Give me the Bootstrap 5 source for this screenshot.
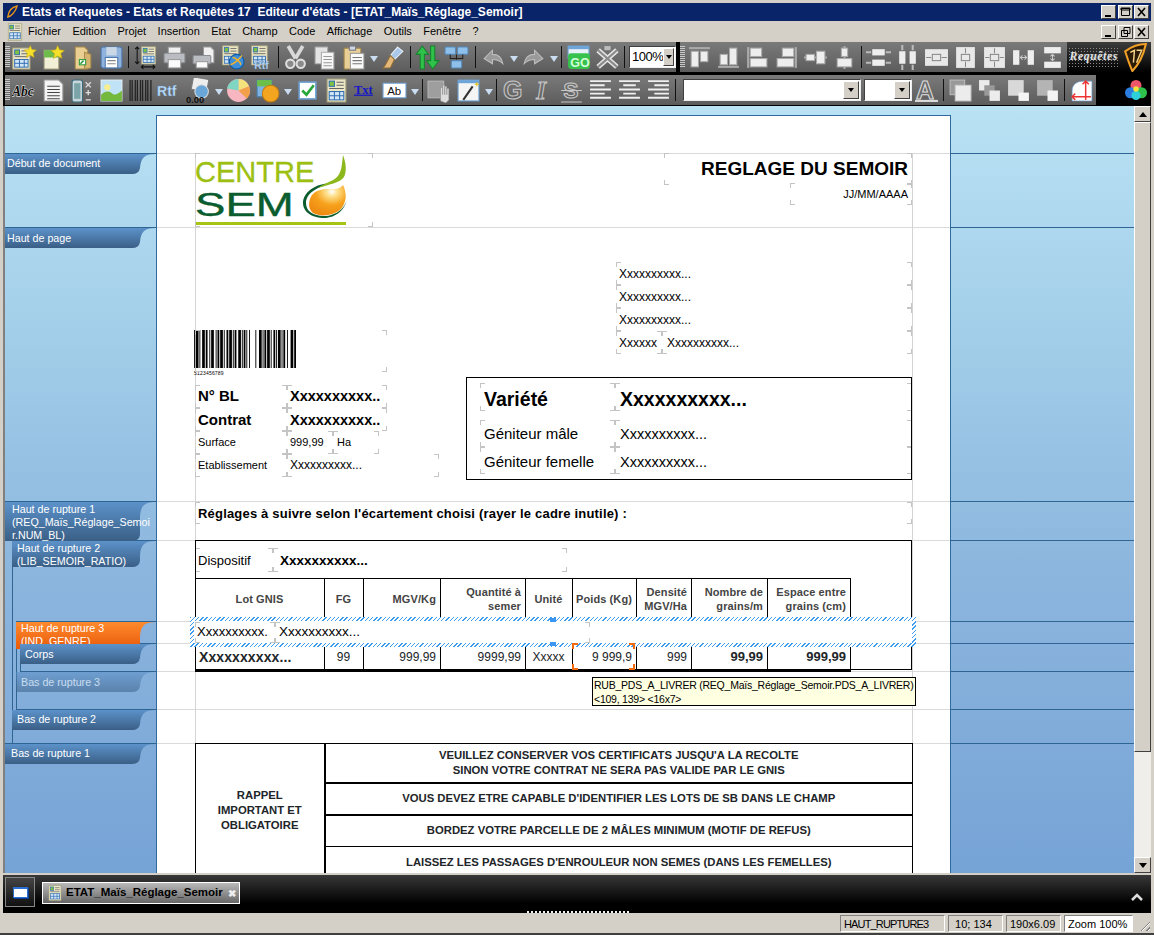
<!DOCTYPE html>
<html lang="fr">
<head>
<meta charset="UTF-8" />
<title>Editeur d'états</title>
<link href="https://cdn.jsdelivr.net/npm/bootstrap@5.3.0/dist/css/bootstrap.min.css" rel="stylesheet" />
<style>
  html, body { height: 100%; overflow: hidden; }
  body { background: #d4d0c8; font-family: "Liberation Sans", Arial, sans-serif; font-size: 11px; color: #000; }
  .app { height: 935px; width: 1154px; padding: 3px 3px 2px 3px; border-bottom: 2px solid #404040; }

  .titlebar { height: 18px; background: #0a246a; color: #fff; font-weight: 700; font-size: 12px; padding-left: 3px; flex: none; }
  .menubar { height: 21px; flex: none; padding-left: 3px; }
  .menubar .nav-link { color: #000; padding: 0; font-size: 11px; line-height: 21px; }
  .menu-items { gap: 0 11.4px; margin-left: 4px; }
  .winbtn { width: 15px; height: 14px; margin-left: 1.5px; background: #d4d0c8; border: 1px solid; border-color: #fff #404040 #404040 #fff; padding: 0; display: flex; }
  .winbtn svg { width: 13px; height: 12px; }
  .winbtns { margin-right: 2px; }

  .toolbars { background: #000; height: 64px; flex: none; padding-left: 2px; }
  .tbrow { height: 30px; }
  .tbrow + .tbrow { margin-top: 3px; }
  .tbgroup { background: linear-gradient(#7a7a7a, #5c5c5c); height: 100%; }
  .grip { width: 5px; height: 22px; background: repeating-linear-gradient(#c8c8c8 0 1px, transparent 1px 2px); flex: none; }
  .tb { width: 29px; height: 26px; flex: none; display: flex; align-items: center; justify-content: center; }
  .tb svg { width: 25px; height: 25px; }
  .dd { width: 11px; flex: none; display: flex; justify-content: center; padding-top: 3px; }
  .dd::after { content: ""; border: 4px solid transparent; border-top: 6px solid #c9dcf0; border-bottom: 0; }
  .sep { width: 5px; height: 22px; flex: none; display: flex; justify-content: center; }
  .sep::after { content: ""; width: 1px; background: #111; }
  .sep.wide { width: 8px; }
  .combo { background: #fff; border: 1px solid; border-color: #404040 #eee #eee #404040; height: 22px; flex: none; display: flex; align-items: center; padding-left: 2px; font-size: 13px; letter-spacing: -.5px; }
  .combo-zoom { width: 47px; margin-left: 2px; }
  .combo-font { width: 178px; margin-left: 5px; }
  .combo-size { width: 48px; margin-left: 3px; }
  .combo b { width: 16px; height: 18px; margin-left: auto; margin-right: 1px; background: #d4d0c8; border: 1px solid; border-color: #fff #404040 #404040 #fff; display: flex; align-items: center; justify-content: center; }
  .combo b::after { content: ""; border: 3.5px solid transparent; border-top: 4px solid #000; border-bottom: 0; }
  .brandbox { background: linear-gradient(#3c3c3c, #000); height: 100%; }
  .brand { color: #e2e2e2; font-style: italic; font-weight: 700; font-size: 11.5px; font-family: "Liberation Serif", serif; letter-spacing: .7px; padding: 1px 2px; text-shadow: 1px 0 0 #555; background: radial-gradient(#8a8a8a .5px, transparent .7px) 0 0/3px 3px; }

  .workspace { height: 767px; flex: none; }
  .leftedge { width: 2px; background: #808080; flex: none; }
  .canvas { width: 1129px; flex: none; position: relative; overflow: hidden; background: linear-gradient(#b9e2f4 0%, #a3cee9 30%, #8db6de 60%, #76a3d6 100%); }
  .scroll { width: 17px; flex: none; background: #efeeea; display: flex; flex-direction: column; }
  .scroll .sb { height: 16px; background: #d4d0c8; border: 1px solid; border-color: #fff #404040 #404040 #fff; display: flex; align-items: center; justify-content: center; flex: none; }
  .scroll .up::after { content: ""; border: 4px solid transparent; border-bottom: 5px solid #000; border-top: 0; }
  .scroll .down::after { content: ""; border: 4px solid transparent; border-top: 5px solid #000; border-bottom: 0; }
  .scroll .thumb { height: 630px; background: #d4d0c8; border: 1px solid; border-color: #fff #404040 #404040 #fff; flex: none; }

  .tabbar { height: 38px; margin-top: 2px; flex: none; background: linear-gradient(#383838, #000 75%); padding-left: 2px; }
  .winicon { width: 30px; height: 30px; border: 1px solid #888; background: linear-gradient(#444, #111); display: flex; align-items: center; justify-content: center; margin-bottom: 6px; }
  .winicon::after { content: ""; width: 15px; height: 11px; background: #fff; border: 1px solid #2a6fd0; border-top-width: 2px; box-shadow: 1px 1px 0 #0b3a90; }
  .doc-tab { width: 198px; height: 22px; margin-left: 7px; margin-bottom: 9px; background: linear-gradient(#b9b9b9, #666); border: 1px solid #fff; font-weight: 700; font-size: 11.5px; color: #000; padding-left: 4px; gap: 3px; }
  .doc-tab svg { width: 16px; height: 16px; flex: none; }
  .tab-close { color: #eee; font-size: 10px; margin-left: 2px; }
  .tab-caret { margin-right: 8px; margin-bottom: 12px; }

  .statusbar { height: 20px; flex: none; position: relative; gap: 3px; padding-right: 18px; }
  .statusbar .dots { position: absolute; left: 524px; top: -2px; width: 104px; height: 2px; background: repeating-linear-gradient(90deg, #f0f0f0 0 2px, transparent 2px 4px); }
  .cell { height: 17px; line-height: 16px; padding-left: 3px; border: 1px solid; border-color: #808080 #fff #fff #808080; font-size: 11px; flex: none; }
  .cell-name { width: 105px; letter-spacing: -.85px; }
  .cell-pos, .cell-size { width: 55px; }
  .cell-zoom { width: 69px; }
  .grip-corner { position: absolute; right: 1px; bottom: 2px; width: 12px; height: 12px; background: repeating-linear-gradient(135deg, transparent 0 2px, #808080 2px 3px, #fff 3px 4px); clip-path: polygon(100% 0, 100% 100%, 0 100%); }

  /* free canvas of the report designer, origin = canvas corner */
  .sheet { position: absolute; left: 151px; top: 9px; width: 795px; height: 800px; background: #fff; border: 1px solid #2f6a9c; }
  .hline, .vline { position: absolute; }
  .hline.page { height: 1px; background: #dadada; }
  .hline.side { height: 1px; background: #2f6593; }
  .vline.side { width: 1px; background: #2f6593; }
  .vline.page { width: 1px; background: #d4d4d4; }
  .tabsec { position: absolute; overflow: hidden; }
  .tabsec svg { position: absolute; left: 0; top: 0; }
  .tabsec div { position: absolute; color: #fff; font-size: 10.7px; line-height: 13px; white-space: nowrap; }
  .tabsec.fade { opacity: .55; }
  .rt { position: absolute; height: 20px; line-height: 20px; white-space: nowrap; font-size: 12px; }
  .rt.b { font-weight: 700; }
  .rt.spaced { letter-spacing: .19px; }
  .barcode-label { font-size: 5px; letter-spacing: .2px; }
  .frame { position: absolute; --c: #c4c4c4; background:
      linear-gradient(var(--c), var(--c)) 0 0/5px 1px no-repeat,
      linear-gradient(var(--c), var(--c)) 0 0/1px 5px no-repeat,
      linear-gradient(var(--c), var(--c)) 100% 0/5px 1px no-repeat,
      linear-gradient(var(--c), var(--c)) 100% 0/1px 5px no-repeat,
      linear-gradient(var(--c), var(--c)) 0 100%/5px 1px no-repeat,
      linear-gradient(var(--c), var(--c)) 0 100%/1px 5px no-repeat,
      linear-gradient(var(--c), var(--c)) 100% 100%/5px 1px no-repeat,
      linear-gradient(var(--c), var(--c)) 100% 100%/1px 5px no-repeat; }
  .frame.sel { --c: #f26a10; background-size: 6px 2px, 2px 6px, 6px 2px, 2px 6px, 6px 2px, 2px 6px, 6px 2px, 2px 6px; }
  .box { position: absolute; border: 1px solid #000; }
  .hatch { position: absolute; padding: 4px; background: repeating-linear-gradient(135deg, #3d9cec 0 1px, #fff 1px 3px); }
  .hatch div { background: #fff; height: 100%; }
  .handle { position: absolute; background: #3a96f0; }
  .tip { position: absolute; background: #ffffe1; border: 1px solid #000; font-size: 10.5px; letter-spacing: -.23px; line-height: 14px; padding: 0 1px; white-space: nowrap; }
  .logo-a { position: absolute; color: #9cbf12; font-size: 29px; line-height: 30px; -webkit-text-stroke: .3px #9cbf12; }
  .logo-b { position: absolute; color: #0b5c2e; font-size: 34px; line-height: 34px; transform: scaleX(1.34); transform-origin: 0 0; -webkit-text-stroke: .4px #0b5c2e; }
  .logo-bar { position: absolute; background: #a5c414; }

  .grid { position: absolute; width: 655px; table-layout: fixed; margin: 0; --bs-table-bg: transparent; }
  .grid td, .grid th { border: 1px solid #000; padding: 0 4px 0 3px; vertical-align: middle; font-size: 12px; line-height: 14px; }
  .grid th { height: 41px; color: #444; font-size: 11px; text-align: right; letter-spacing: .1px; }
  .grid td { height: 27px; text-align: right; border-bottom-width: 2px; }
  .grid th.center, .grid td.center { text-align: center; }
  .grid .lead { text-align: left; font-weight: 700; font-size: 14px; letter-spacing: .1px; }
  .grid .strong { font-weight: 700; font-size: 13px; }
  .remind { position: absolute; width: 717px; table-layout: fixed; margin: 0; --bs-table-bg: transparent; }
  .remind td { border: 1px solid #000; border-width: 1px; padding: 0 4px; text-align: center; vertical-align: middle; font-weight: 700; font-size: 11.3px; line-height: 15px; }
  .remind .thick td { border-bottom-width: 2px; }
  .remind .first { height: 39px; }
  .remind .next { height: 32px; }
  .remind .lefttop { border-right-width: 2px; border-bottom-width: 1px; }
</style>
</head>
<body>
<svg width="0" height="0" class="position-absolute">
  <defs>
    <symbol id="rep" viewBox="0 0 24 24"><rect x="3" y="1" width="18" height="22" fill="#ece7c6" stroke="#a9a57e"/><rect x="5" y="3" width="5" height="5" fill="#7fc241" stroke="#2f6db3"/><path d="M12 4h7M12 7h7M5 10h14" stroke="#666"/><rect x="5" y="13" width="14" height="8" fill="#d3e6f6" stroke="#2f6db3"/><path d="M5 17h14M10 13v8M15 13v8" stroke="#2f6db3"/></symbol>
    <symbol id="star" viewBox="0 0 24 24"><path d="M12 1l3 7 8 1-6 5 2 8-7-4-7 4 2-8-6-5 8-1z" fill="#f5e02c" stroke="#c9a90f"/></symbol>
    <symbol id="repnew" viewBox="0 0 24 24"><use href="#rep" x="-2" y="2" width="22" height="22"/><use href="#star" x="11" y="0" width="13" height="13"/></symbol>
    <symbol id="docnew" viewBox="0 0 24 24"><path d="M3 5h14v18H3z" fill="#f3f0d8" stroke="#a9a57e"/><rect x="3" y="5" width="14" height="7" fill="#6ebc4a"/><use href="#star" x="9" y="0" width="14" height="14"/></symbol>
    <symbol id="open" viewBox="0 0 24 24"><path d="M5 2h9l3 3v18H5z" fill="#e9cf92" stroke="#a88a4c"/><path d="M14 7l6 2v13l-6 1z" fill="#d5b570" stroke="#a88a4c"/><rect x="9" y="14" width="6" height="5" fill="#fff" stroke="#2c9a3b"/><path d="M10 18l3-3" stroke="#2c9a3b" stroke-width="1.500"/></symbol>
    <symbol id="save" viewBox="0 0 24 24"><rect x="2" y="2" width="20" height="20" rx="2" fill="#8fb3dd" stroke="#4d78ad"/><rect x="7" y="2" width="10" height="8" fill="#c9d7e6"/><rect x="6" y="12" width="12" height="10" fill="#fff" stroke="#4d78ad"/><path d="M8 15h8M8 18h8" stroke="#888"/></symbol>
    <symbol id="height" viewBox="0 0 24 24"><use href="#rep" x="6" y="1" width="18" height="18"/><path d="M4 2v16M2 4l2-2 2 2M2 16l2 2 2-2M8 21h13M10 19l-2 2 2 2M19 19l2 2-2 2" stroke="#111" fill="none"/></symbol>
    <symbol id="print" viewBox="0 0 24 24"><rect x="6" y="2" width="12" height="7" fill="#efefef" stroke="#999"/><rect x="2" y="8" width="20" height="9" rx="1" fill="#b9bcc0" stroke="#8a8d91"/><rect x="6" y="14" width="12" height="8" fill="#fafafa" stroke="#999"/></symbol>
    <symbol id="print2" viewBox="0 0 24 24"><path d="M12 2h7l3 3v12h-10z" fill="#f1f1f1" stroke="#999"/><rect x="2" y="10" width="17" height="8" rx="1" fill="#b9bcc0" stroke="#8a8d91"/><rect x="5" y="16" width="11" height="6" fill="#fafafa" stroke="#999"/></symbol>
    <symbol id="repweb" viewBox="0 0 24 24"><use href="#rep" x="0" y="0" width="20" height="20"/><ellipse cx="16" cy="16" rx="7" ry="7" fill="#3c8fd8" stroke="#0e5aa8"/><path d="M10 19c4-1 9-6 11-9M12 12c2 0 7 3 8 7" stroke="#f2b02c" stroke-width="1.500" fill="none"/></symbol>
    <symbol id="reprtf" viewBox="0 0 24 24"><use href="#rep" x="0" y="0" width="20" height="20"/><text x="5" y="23" font-family="Liberation Sans" font-weight="700" font-size="10" fill="#bfe0ff" stroke="#5a7fa8" stroke-width=".3">Rtf</text></symbol>
    <symbol id="cut" viewBox="0 0 24 24"><path d="M5 1l7 12M19 1l-7 12" stroke="#d8d8d8" stroke-width="3.500"/><circle cx="7" cy="18" r="4" fill="#8a8a8a" stroke="#ddd" stroke-width="2"/><circle cx="17" cy="18" r="4" fill="#8a8a8a" stroke="#ddd" stroke-width="2"/></symbol>
    <symbol id="copy" viewBox="0 0 24 24"><path d="M3 2h12v16H3z" fill="#e4e4e4" stroke="#aaa"/><path d="M9 7h12v16H9z" fill="#f7f7f7" stroke="#aaa"/><path d="M11 11h8M11 14h8M11 17h8M11 20h8" stroke="#999"/></symbol>
    <symbol id="paste" viewBox="0 0 24 24"><rect x="3" y="3" width="16" height="20" rx="1" fill="#e8cf96" stroke="#a88a4c"/><rect x="8" y="1" width="6" height="4" fill="#cfd6df" stroke="#778"/><rect x="9" y="8" width="13" height="15" fill="#fafafa" stroke="#999"/><path d="M11 12h9M11 15h9M11 18h9" stroke="#777"/></symbol>
    <symbol id="brush" viewBox="0 0 24 24"><path d="M16 2l5 4-8 8-4-4z" fill="#a9c8ea" stroke="#e9f1fa"/><path d="M9 10l4 4-4 8-7 0c3-3 4-7 7-12z" fill="#e3b878" stroke="#8d6a34"/></symbol>
    <symbol id="updown" viewBox="0 0 24 24"><path d="M7 1l6 8H9v14H5V9H1z" fill="#2fc24b" stroke="#16822b"/><path d="M17 23l6-8h-4V1h-4v14h-4z" fill="#2fc24b" stroke="#16822b"/></symbol>
    <symbol id="org" viewBox="0 0 24 24"><rect x="1" y="2" width="10" height="7" rx="1" fill="#8fc0ea" stroke="#5589b8"/><rect x="13" y="2" width="10" height="7" rx="1" fill="#8fc0ea" stroke="#5589b8"/><path d="M12 9v5M6 9v4h12V9" stroke="#222" fill="none"/><rect x="7" y="15" width="10" height="7" rx="1" fill="#8fc0ea" stroke="#5589b8"/></symbol>
    <symbol id="undo" viewBox="0 0 24 24"><path d="M3 13l8-8v4c5 0 9 3 10 9-3-3-6-4-10-4v4z" fill="#9a9a9a" stroke="#bdbdbd"/></symbol>
    <symbol id="redo" viewBox="0 0 24 24"><path d="M21 13l-8-8v4c-5 0-9 3-10 9 3-3 6-4 10-4v4z" fill="#9a9a9a" stroke="#bdbdbd"/></symbol>
    <symbol id="go" viewBox="0 0 24 24"><rect x="2" y="1" width="20" height="12" fill="#e8f0f8" stroke="#6fa4d8"/><rect x="2" y="1" width="20" height="3" fill="#6fa4d8"/><rect x="2" y="8" width="21" height="15" rx="3" fill="#36c24c"/><text x="4" y="21" font-family="Liberation Sans" font-weight="700" font-size="12" fill="#d2ffd8">GO</text></symbol>
    <symbol id="xcross" viewBox="0 0 24 24"><path d="M3 5l18 16M21 5L3 21" stroke="#e4e4e4" stroke-width="5"/><path d="M3 5l18 16M21 5L3 21" stroke="#8a8a8a" stroke-width="2"/><rect x="9" y="1" width="6" height="4" fill="#bbb"/></symbol>

    <symbol id="alTop" viewBox="0 0 24 24"><path d="M2 3h20" stroke="#aaa" stroke-width="2"/><rect x="4" y="6" width="7" height="15" fill="#eee" stroke="#aaa"/><rect x="13" y="6" width="7" height="10" fill="#eee" stroke="#aaa"/></symbol>
    <symbol id="alBot" viewBox="0 0 24 24"><path d="M2 21h20" stroke="#aaa" stroke-width="2"/><rect x="4" y="9" width="7" height="10" fill="#eee" stroke="#aaa"/><rect x="13" y="3" width="7" height="16" fill="#eee" stroke="#aaa"/></symbol>
    <symbol id="alLeft" viewBox="0 0 24 24"><path d="M3 2v20" stroke="#aaa" stroke-width="2"/><rect x="5" y="3" width="11" height="8" fill="#eee" stroke="#aaa"/><rect x="5" y="13" width="16" height="8" fill="#eee" stroke="#aaa"/></symbol>
    <symbol id="alRight" viewBox="0 0 24 24"><path d="M21 2v20" stroke="#aaa" stroke-width="2"/><rect x="8" y="3" width="11" height="8" fill="#eee" stroke="#aaa"/><rect x="3" y="13" width="16" height="8" fill="#eee" stroke="#aaa"/></symbol>
    <symbol id="alMidH" viewBox="0 0 24 24"><path d="M1 12h22" stroke="#aaa" stroke-width="2"/><rect x="3" y="9" width="8" height="6" fill="#eee" stroke="#aaa"/><rect x="13" y="6" width="8" height="12" fill="#eee" stroke="#aaa"/></symbol>
    <symbol id="alMidV" viewBox="0 0 24 24"><path d="M12 1v22" stroke="#aaa" stroke-width="2"/><rect x="9" y="3" width="6" height="8" fill="#eee" stroke="#aaa"/><rect x="5" y="13" width="14" height="8" fill="#eee" stroke="#aaa"/></symbol>
    <symbol id="spH" viewBox="0 0 24 24"><rect x="6" y="4" width="12" height="6" fill="#eee"/><rect x="6" y="14" width="12" height="6" fill="#eee"/><path d="M0 7h5M24 7h-5M0 17h5M24 17h-5" stroke="#bbb" stroke-width="2"/></symbol>
    <symbol id="spV" viewBox="0 0 24 24"><rect x="4" y="6" width="6" height="12" fill="#eee"/><rect x="14" y="6" width="6" height="12" fill="#eee"/><path d="M7 0v5M7 24v-5M17 0v5M17 24v-5" stroke="#bbb" stroke-width="2"/></symbol>
    <symbol id="ctH" viewBox="0 0 24 24"><rect x="1" y="4" width="22" height="16" fill="#e8e8e8"/><rect x="8" y="9" width="8" height="6" fill="none" stroke="#888"/><path d="M2 12h5M22 12h-5" stroke="#888"/></symbol>
    <symbol id="ctV" viewBox="0 0 24 24"><rect x="3" y="2" width="18" height="20" fill="#e8e8e8"/><rect x="8" y="9" width="8" height="6" fill="none" stroke="#888"/><path d="M12 3v5M12 21v-5" stroke="#888"/></symbol>
    <symbol id="ctB" viewBox="0 0 24 24"><rect x="2" y="2" width="20" height="20" fill="#e8e8e8"/><rect x="8" y="9" width="8" height="6" fill="none" stroke="#888"/><path d="M12 3v5M12 21v-5M3 12h4M21 12h-4" stroke="#888"/></symbol>
    <symbol id="joinH" viewBox="0 0 24 24"><rect x="2" y="5" width="6" height="14" fill="#eee"/><rect x="16" y="5" width="6" height="14" fill="#eee"/><path d="M9 12h6M11 10l-2 2 2 2M13 10l2 2-2 2" stroke="#ccc" fill="none"/></symbol>
    <symbol id="joinV" viewBox="0 0 24 24"><rect x="4" y="2" width="16" height="6" fill="#eee"/><rect x="4" y="16" width="16" height="6" fill="#eee"/><path d="M12 9v6M10 11l2-2 2 2M10 13l2 2 2-2" stroke="#ccc" fill="none"/></symbol>

    <symbol id="abc" viewBox="0 0 24 24"><text x="0" y="17" font-family="Liberation Serif" font-style="italic" font-weight="700" font-size="13" fill="#111" stroke="#fff" stroke-width=".8" paint-order="stroke">Abc</text></symbol>
    <symbol id="list" viewBox="0 0 24 24"><path d="M3 2h14l4 4v16H3z" fill="#f4f4f4" stroke="#999"/><path d="M6 8h12M6 11h12M6 14h12M6 17h12M6 20h12" stroke="#444"/></symbol>
    <symbol id="calc" viewBox="0 0 24 24"><rect x="2" y="2" width="10" height="21" rx="2" fill="#c7d6da" stroke="#3b6a7a"/><rect x="4" y="5" width="6" height="15" fill="#7ba4a8"/><path d="M15 4l5 5M20 4l-5 5M15 14h5M17.500 11.500v5M15 21h5" stroke="#ddd" stroke-width="1.300"/></symbol>
    <symbol id="image" viewBox="0 0 24 24"><rect x="2" y="2" width="20" height="20" fill="#bfe2f6" stroke="#e8f4fb"/><circle cx="8" cy="9" r="3" fill="#f7ee8f"/><path d="M2 22v-6c5-5 9-3 11-1s6 0 9-3v10z" fill="#75b83e"/></symbol>
    <symbol id="barcode" viewBox="0 0 24 24"><path d="M2 2v20M4 2v20M7 2v20M9 2v20M12 2v20M14 2v20M17 2v20M19 2v20M22 2v20" stroke="#222" stroke-width="1.200"/></symbol>
    <symbol id="rtf" viewBox="0 0 24 24"><text x="0" y="17" font-family="Liberation Sans" font-weight="700" font-size="13.500" fill="#bfe0ff" stroke="#5a7fa8" stroke-width=".3">Rtf</text></symbol>
    <symbol id="cal" viewBox="0 0 24 24"><rect x="6" y="0" width="15" height="12" fill="#eee" stroke="#777" transform="rotate(10 13 6)"/><circle cx="15" cy="13" r="6.500" fill="#6aa7d8" stroke="#ddd"/><text x="0" y="24" font-family="Liberation Sans" font-weight="700" font-size="9" fill="#111">0.00</text></symbol>
    <symbol id="pie" viewBox="0 0 24 24"><circle cx="12" cy="12" r="11" fill="#f7b6c0"/><path d="M12 12V1a11 11 0 0 1 10 7z" fill="#f4e27c"/><path d="M12 12l10-4a11 11 0 0 1-2 12z" fill="#f3a04a"/><path d="M12 12L1 10a11 11 0 0 1 11-9z" fill="#7fd6c2"/></symbol>
    <symbol id="shapes" viewBox="0 0 24 24"><rect x="2" y="2" width="14" height="16" fill="#7fb4e0" stroke="#4a7fae"/><path d="M2 2l14 0 0 6-14 0z" fill="#6cc04a"/><circle cx="15" cy="15" r="8" fill="#f3a51f" stroke="#c07c10"/></symbol>
    <symbol id="check" viewBox="0 0 24 24"><rect x="4" y="4" width="16" height="16" fill="#fff" stroke="#6fa4d8" stroke-width="1.500"/><path d="M7 12l4 4 7-9" stroke="#27a63a" stroke-width="2.500" fill="none"/></symbol>
    <symbol id="txt" viewBox="0 0 24 24"><text x="1" y="15" font-family="Liberation Serif" font-weight="700" font-size="12" fill="#1616c8" text-decoration="underline">Txt</text></symbol>
    <symbol id="ab" viewBox="0 0 24 24"><rect x="1" y="5" width="22" height="14" fill="#fff" stroke="#6fa4d8"/><text x="5" y="16" font-family="Liberation Sans" font-size="11" fill="#111">Ab</text></symbol>
    <symbol id="imgHand" viewBox="0 0 24 24"><rect x="1" y="3" width="15" height="16" fill="#9e9e9e" stroke="#b8b8b8"/><path d="M13 22V9h2v7-9h2v9-8h2v8-6h2v11l-3 3z" fill="#ddd" stroke="#888" stroke-width=".5"/></symbol>
    <symbol id="wand" viewBox="0 0 24 24"><rect x="2" y="2" width="20" height="20" fill="#f4f4f4" stroke="#6fa4d8"/><rect x="2" y="2" width="20" height="3" fill="#6fa4d8"/><path d="M7 21L16 8" stroke="#333" stroke-width="2"/><path d="M18 6h4M20 4v4" stroke="#e8c010"/></symbol>
    <symbol id="fG" viewBox="0 0 24 24"><text x="2" y="20" font-family="Liberation Sans" font-weight="700" font-size="24" fill="none" stroke="#c8c8c8">G</text></symbol>
    <symbol id="fI" viewBox="0 0 24 24"><text x="6" y="20" font-family="Liberation Serif" font-style="italic" font-weight="700" font-size="24" fill="none" stroke="#c8c8c8">I</text></symbol>
    <symbol id="fS" viewBox="0 0 24 24"><text x="4" y="19" font-family="Liberation Sans" font-weight="700" font-size="22" fill="none" stroke="#c8c8c8">S</text><path d="M2 12h20M2 23h20" stroke="#c8c8c8"/></symbol>
    <symbol id="tL" viewBox="0 0 24 24"><path d="M2 3h20M2 7h14M2 11h20M2 15h14M2 19h20" stroke="#f0f0f0" stroke-width="1.800"/></symbol>
    <symbol id="tC" viewBox="0 0 24 24"><path d="M2 3h20M6 7h12M2 11h20M6 15h12M2 19h20" stroke="#f0f0f0" stroke-width="1.800"/></symbol>
    <symbol id="tR" viewBox="0 0 24 24"><path d="M2 3h20M8 7h14M2 11h20M8 15h14M2 19h20" stroke="#f0f0f0" stroke-width="1.800"/></symbol>
    <symbol id="bigA" viewBox="0 0 24 24"><text x="2" y="20" font-family="Liberation Sans" font-weight="700" font-size="24" fill="#6a6a6a" stroke="#ddd">A</text><path d="M1 22h22" stroke="#ddd" stroke-width="2"/></symbol>
    <symbol id="ord1" viewBox="0 0 24 24"><rect x="2" y="2" width="14" height="14" fill="#999" stroke="#bbb"/><rect x="7" y="7" width="15" height="15" fill="#ececec" stroke="#ccc"/></symbol>
    <symbol id="ord2" viewBox="0 0 24 24"><rect x="2" y="2" width="10" height="10" fill="#ececec"/><rect x="7" y="7" width="10" height="10" fill="#999"/><rect x="12" y="12" width="10" height="10" fill="#ececec"/></symbol>
    <symbol id="ord3" viewBox="0 0 24 24"><rect x="2" y="2" width="15" height="15" fill="#d8d8d8"/><rect x="12" y="14" width="10" height="8" fill="#f4f4f4"/></symbol>
    <symbol id="ord4" viewBox="0 0 24 24"><rect x="2" y="2" width="15" height="15" fill="#b4b4b4"/><rect x="12" y="12" width="10" height="10" fill="#f4f4f4"/></symbol>
    <symbol id="corner" viewBox="0 0 24 24"><path d="M3 22V12C3 6 8 3 14 3h8v19z" fill="#fff" stroke="#6fa4d8" stroke-width=".6"/><path d="M16 3v18M13 6l3-3 3 3M3 18h18M6 15l-3 3 3 3" stroke="#e33" stroke-width="1.400" fill="none"/></symbol>
    <symbol id="color" viewBox="0 0 24 24"><circle cx="12" cy="7" r="6" fill="#f0566a"/><circle cx="6" cy="15" r="6" fill="#2b7de0"/><circle cx="18" cy="15" r="6" fill="#2fc24a"/><circle cx="12" cy="18" r="5" fill="#2dd0d8"/><circle cx="12" cy="11" r="3" fill="#f4e13c"/></symbol>
  </defs>
</svg>

<div class="app d-flex flex-column">
  <div class="titlebar d-flex align-items-center">
    <svg width="12" height="16" viewBox="0 0 14 16" class="me-1 flex-none"><path d="M13 1C8 2 3 5 2 14c4-1 9-6 11-13z" fill="#0a246a" stroke="#e9971c" stroke-width="1.500"/></svg>
    <span>Etats et Requetes - Etats et Requêtes 17&nbsp; Editeur d'états - [ETAT_Maïs_Réglage_Semoir]</span>
    <div class="ms-auto d-flex winbtns">
      <button class="winbtn" aria-label="Réduire"><svg viewBox="0 0 13 12"><path d="M3 9h6v2H3z"/></svg></button>
      <button class="winbtn" aria-label="Agrandir"><svg viewBox="0 0 13 12"><path d="M2.500 2.500h8v7h-8zM2 2h9v2H2z" fill="none" stroke="#000"/></svg></button>
      <button class="winbtn" aria-label="Fermer"><svg viewBox="0 0 13 12"><path d="M3 2l7 8M10 2l-7 8" stroke="#000" stroke-width="1.600"/></svg></button>
    </div>
  </div>

  <div class="menubar d-flex align-items-center">
    <svg width="18" height="18" viewBox="0 0 24 24"><use href="#rep"/></svg>
    <nav class="nav menu-items">
      <a class="nav-link" href="#">Fichier</a>
      <a class="nav-link" href="#">Edition</a>
      <a class="nav-link" href="#">Projet</a>
      <a class="nav-link" href="#">Insertion</a>
      <a class="nav-link" href="#">Etat</a>
      <a class="nav-link" href="#">Champ</a>
      <a class="nav-link" href="#">Code</a>
      <a class="nav-link" href="#">Affichage</a>
      <a class="nav-link" href="#">Outils</a>
      <a class="nav-link" href="#">Fenêtre</a>
      <a class="nav-link" href="#">?</a>
    </nav>
    <div class="ms-auto d-flex winbtns">
      <button class="winbtn" aria-label="Réduire"><svg viewBox="0 0 13 12"><path d="M3 9h6v2H3z"/></svg></button>
      <button class="winbtn" aria-label="Restaurer"><svg viewBox="0 0 13 12"><path d="M5 1.500h6v6H5zM2.500 4.500h6v6h-6z" fill="#d4d0c8" stroke="#000"/></svg></button>
      <button class="winbtn" aria-label="Fermer"><svg viewBox="0 0 13 12"><path d="M3 2l7 8M10 2l-7 8" stroke="#000" stroke-width="1.600"/></svg></button>
    </div>
  </div>

  <div class="toolbars">
    <div class="tbrow d-flex align-items-center">
      <div class="tbgroup d-flex align-items-center" data-tools="repnew docnew open save | height print print2 repweb reprtf | cut copy paste v brush | updown org |w undo v redo v | go xcross | zoom"></div>
      <div class="tbgroup d-flex align-items-center ms-1" data-tools="alTop alBot alLeft alRight alMidH alMidV | spH spV ctH ctV ctB joinH joinV"></div>
      <div class="brandbox flex-grow-1 d-flex align-items-center justify-content-end pe-1">
        <span class="brand me-1">Requêtes</span>
        <svg width="23" height="29" viewBox="0 0 22 28"><path d="M1 8C8 3 15 1 21 1c-2 9-7 20-13 26C5 21 3 14 1 8z" fill="#2a1a06" stroke="#f0a028" stroke-width="2"/><path d="M6 9l4-2-1 12M12 7h5l-5 12" stroke="#f6d48a" stroke-width="1.400" fill="none"/></svg>
      </div>
    </div>
    <div class="tbrow d-flex align-items-center">
      <div class="tbgroup d-flex align-items-center" data-tools="abc list calc image barcode rtf cal v pie shapes v check rep txt ab v | imgHand wand v | fG fI fS tL tC tR | font size bigA | ord1 ord2 ord3 ord4 | corner"></div>
      <div class="flex-grow-1 d-flex align-items-center justify-content-end pe-1">
        <svg width="22" height="22" viewBox="0 0 24 24"><use href="#color"/></svg>
      </div>
    </div>
  </div>

  <div class="workspace d-flex">
    <div class="leftedge"></div>
    <div class="canvas" id="canvas"><div class="sheet"></div></div>
    <div class="scroll">
      <div class="sb up"></div>
      <div class="thumb"></div>
      <div class="flex-grow-1"></div>
      <div class="sb down"></div>
    </div>
  </div>

  <div class="tabbar d-flex align-items-end">
    <div class="winicon"></div>
    <div class="doc-tab d-flex align-items-center">
      <svg viewBox="0 0 24 24"><use href="#rep"/></svg>
      <span>ETAT_Maïs_Réglage_Semoir</span>
      <span class="tab-close">✖</span>
    </div>
    <svg class="ms-auto tab-caret" width="12" height="8" viewBox="0 0 12 8"><path d="M1 7l5-5 5 5" stroke="#ddd" stroke-width="2.500" fill="none"/></svg>
  </div>

  <div class="statusbar d-flex align-items-center justify-content-end">
    <span class="dots"></span>
    <div class="cell cell-name">HAUT_RUPTURE3</div>
    <div class="cell cell-pos">&nbsp;10; 134</div>
    <div class="cell cell-size">190x6.09</div>
    <div class="cell cell-zoom bg-white">Zoom 100%</div>
    <div class="grip-corner"></div>
  </div>
</div>

<script src="https://cdn.jsdelivr.net/npm/bootstrap@5.3.0/dist/js/bootstrap.bundle.min.js"></script>
<script>
  // toolbars
  const combos = { zoom: '<div class="combo combo-zoom">100%<b></b></div>', font: '<div class="combo combo-font"><b></b></div>', size: '<div class="combo combo-size"><b></b></div>' };
  document.querySelectorAll("[data-tools]").forEach(bar => {
    let html = '<div class="grip"></div>';
    bar.dataset.tools.split(" ").forEach(t => {
      if (t === "|") html += '<div class="sep"></div>';
      else if (t === "|w") html += '<div class="sep wide"></div>';
      else if (t === "v") html += '<div class="dd"></div>';
      else if (combos[t]) html += combos[t];
      else html += `<div class="tb"><svg viewBox="0 0 24 24"><use href="#${t}"/></svg></div>`;
    });
    bar.innerHTML = html;
  });

  // designer canvas: every coordinate below is in screen pixels
  const OX = 5, OY = 106;
  const canvas = document.getElementById("canvas");
  const add = (cls, x, y, w, h, inner = "") => {
    const d = document.createElement("div");
    d.className = cls;
    d.style.left = x - OX + "px";
    d.style.top = y - OY + "px";
    if (w != null) d.style.width = w + "px";
    if (h != null) d.style.height = h + "px";
    d.innerHTML = inner;
    canvas.appendChild(d);
    return d;
  };

  // section lines
  [153, 227, 501, 540, 621, 643, 671, 709, 743].forEach(y => {
    add("hline page", 157, y, 793, 1);
    add("hline side", 950, y, 184, 1);
  });
  add("vline page", 195, 153, 1, 720);
  add("vline page", 912, 153, 1, 720);

  // nesting of the breaks
  [[5, 153, 151], [5, 227, 151], [5, 501, 151], [12, 540, 144], [16, 621, 140], [20, 643, 136], [20, 671, 136], [16, 709, 140], [12, 743, 144], [5, 743, 151]]
    .forEach(l => add("hline side", l[0], l[1], l[2], 1));
  add("vline side", 12, 540, 1, 203);
  add("vline side", 16, 621, 1, 88);
  add("vline side", 20, 643, 1, 28);

  // section tabs
  const sections = [
    { x: 5, y: 154, h: 20, tx: 2, ty: 3, label: "Début de document" },
    { x: 5, y: 228, h: 20, tx: 2, ty: 4, label: "Haut de page" },
    { x: 5, y: 502, h: 39, tx: 7, ty: 1, label: "Haut de rupture 1<br>(REQ_Maïs_Réglage_Semoi<br>r.NUM_BL)" },
    { x: 12, y: 541, h: 26, tx: 5, ty: 1, label: "Haut de rupture 2<br>(LIB_SEMOIR_RATIO)" },
    { x: 16, y: 622, h: 27, tx: 5, ty: 0, label: "Haut de rupture 3<br>(IND_GENRE)", orange: true },
    { x: 20, y: 644, h: 20, tx: 5, ty: 4, label: "Corps" },
    { x: 16, y: 672, h: 20, tx: 5, ty: 4, label: "Bas de rupture 3", fade: true },
    { x: 12, y: 710, h: 20, tx: 5, ty: 3, label: "Bas de rupture 2" },
    { x: 5, y: 744, h: 20, tx: 6, ty: 3, label: "Bas de rupture 1" }
  ];
  sections.forEach((s, i) => {
    const w = 156 - s.x, h = s.h;
    const stops = s.orange ? ["#ff8a2e", "#e85a08"] : ["#5c92ca", "#3a5f86"];
    const path = `M0 0H${w}C${w - 12} 0 ${w - 15} 4 ${w - 16} ${Math.min(h, 20) - 6}V${h - 6}Q${w - 17} ${h} ${w - 24} ${h}H0Z`;
    add("tabsec" + (s.fade ? " fade" : ""), s.x, s.y, w, h,
      `<svg width="${w}" height="${h}"><defs><linearGradient id="g${i}" x1="0" y1="0" x2="0" y2="1"><stop offset="0" stop-color="${stops[0]}"/><stop offset="1" stop-color="${stops[1]}"/></linearGradient></defs><path d="${path}" fill="url(#g${i})"/></svg><div style="left:${s.tx}px;top:${s.ty}px">${s.label}</div>`);
  });
  // Corps passes over the orange tab
  canvas.querySelectorAll(".tabsec")[5].style.zIndex = 2;

  // logo
  add("logo-a", 195, 157, null, null, "CENTRE");
  add("logo-b", 195, 187, null, null, "SEM");
  add("logo-bar", 196, 222, 150, 3);
  add("position-absolute", 300, 153, 50, 67,
    `<svg width="50" height="67" viewBox="0 0 50 67"><defs><radialGradient id="dr" cx=".62" cy=".22" r=".8"><stop offset="0" stop-color="#fff"/><stop offset=".2" stop-color="#fde08a"/><stop offset=".55" stop-color="#f7a21c"/><stop offset="1" stop-color="#ee8a12"/></radialGradient></defs>
    <path d="M34 30C14 30 3 40 3 50c0 10 11 15 21 15 12 0 22-9 23-20-1 10-11 18-23 18C13 63 6 58 6 50c0-10 12-17 28-20z" fill="#0b5c2e"/>
    <path d="M43 32c4 8 4 18-3 25-7 6-20 7-27 3-5-4-5-12-1-18 5-6 13-6 18-6 6 0 10 0 13-4z" fill="url(#dr)"/>
    <path d="M43 2c3 8 4 16 1 22-4 6-14 7-26 11 6-5 14-6 19-11 5-5 5-14 6-22z" fill="#8cb81c"/></svg>`);

  // barcode
  const bars = [1,1,3,1,1,2,3,1,2,2,1,1,3,2,1,1,2,1,3,1,1,2,2,1,3,1,1,1,2,2,3,1,1,1,2,1,1,2,1,6,1,3,3,1,1,1,2,1,3,1,1,2,2,1,1,1,3,1,1,1,2,2,1,3,3,1,2];
  let bx = 0, rects = "";
  bars.forEach((b, i) => { if (i % 2 === 0) rects += `<rect x="${bx}" y="0" width="${b}" height="38"/>`; bx += b; });
  add("position-absolute", 194, 330, 102, 38, `<svg width="102" height="38" viewBox="0 0 ${bx} 38" preserveAspectRatio="none">${rects}</svg>`);
  add("rt", 194, 361, 40, null, '<span class="barcode-label">5123456789</span>');

  // texts: unused, x, centre y, text, size, bold, width when right aligned, extra class
  const texts = [
    [196, 672, 169, "REGLAGE DU SEMOIR", 19, 1, 236],
    [0, 790, 194, "JJ/MM/AAAA", 11, 0, 118],
    [0, 619, 274, "Xxxxxxxxxx...", 12, 0],
    [0, 619, 297, "Xxxxxxxxxx...", 12, 0],
    [0, 619, 320, "Xxxxxxxxxx...", 12, 0],
    [0, 619, 343, "Xxxxxx", 12, 0],
    [0, 667, 343, "Xxxxxxxxxx...", 12, 0],
    [0, 198, 396, "N° BL", 15, 1],
    [0, 290, 396, "Xxxxxxxxxx..", 14.5, 1],
    [0, 198, 420, "Contrat", 15, 1],
    [0, 290, 420, "Xxxxxxxxxx..", 14.5, 1],
    [0, 198, 442, "Surface", 11, 0],
    [0, 290, 442, "999,99", 11, 0],
    [0, 337, 442, "Ha", 11, 0],
    [0, 198, 465, "Etablissement", 11, 0],
    [0, 290, 465, "Xxxxxxxxxx...", 12, 0],
    [0, 484, 399, "Variété", 19.5, 1],
    [0, 620, 399, "Xxxxxxxxxx...", 19.5, 1],
    [0, 484, 434, "Géniteur mâle", 15, 0],
    [0, 620, 434, "Xxxxxxxxxx...", 14.5, 0],
    [0, 484, 462, "Géniteur femelle", 15, 0],
    [0, 620, 462, "Xxxxxxxxxx...", 14.5, 0],
    [0, 198, 514, "Réglages à suivre selon l'écartement choisi (rayer le cadre inutile) :", 13, 1, null, "spaced"],
    [0, 198, 561, "Dispositif", 13, 0],
    [0, 280, 561, "Xxxxxxxxxx...", 13.5, 1]
  ];

  // handles of the report fields
  const frames = [
    [195,153,178,74],[664,153,248,32],[790,183,122,22],
    [616,262,296,23],[616,285,296,23],[616,308,296,23],[616,331,46,23],[662,331,250,23],
    [195,330,192,42],[195,385,92,23],[287,385,100,23],[195,408,92,23],[287,408,100,23],
    [195,431,92,23],[287,431,46,23],[333,431,46,23],[195,454,92,23],[287,454,152,23],
    [480,383,135,28],[615,383,297,28],[480,420,135,27],[615,420,297,27],[480,447,135,27],[615,447,297,27],
    [195,502,717,22],[195,548,78,24],[273,548,294,24]
  ];
  frames.forEach(f => add("frame", f[0], f[1], f[2], f[3]));

  add("box", 466, 377, 446, 103);
  add("box", 195, 540, 717, 130);

  // grid of the body
  const cols = [129, 39, 77, 85, 47, 64, 55, 76, 83];
  const colgroup = "<colgroup>" + cols.map(c => `<col width="${c}">`).join("") + "</colgroup>";
  const head = ["Lot GNIS", "FG", "MGV/Kg", "Quantité à semer", "Unité", "Poids (Kg)", "Densité MGV/Ha", "Nombre de grains/m", "Espace entre grains (cm)"];
  const row = ["Xxxxxxxxxx...", "99", "999,99", "9999,99", "Xxxxx", "9 999,9", "999", "99,99", "999,99"];
  const headTable = document.createElement("table");
  headTable.className = "table grid";
  headTable.innerHTML = colgroup + "<tr>" + head.map((h, i) => `<th class="${i < 2 || i === 4 || i === 5 ? "center" : ""}">${h}</th>`).join("") + "</tr>";
  headTable.style.left = 195 - OX + "px"; headTable.style.top = 578 - OY + "px";
  canvas.appendChild(headTable);

  const rowTable = document.createElement("table");
  rowTable.className = "table grid";
  rowTable.innerHTML = colgroup + "<tr>" + row.map((h, i) => `<td class="${i === 0 ? "lead" : i === 1 || i === 4 ? "center" : i > 6 ? "strong" : ""}">${h}</td>`).join("") + "</tr>";
  rowTable.style.left = 195 - OX + "px"; rowTable.style.top = 643 - OY + "px";
  canvas.appendChild(rowTable);

  // selected break
  add("hatch", 190, 617, 726, 30, "<div></div>");
  add("frame", 195, 622, 80, 21);
  add("frame", 275, 622, 315, 21);
  add("handle", 550, 618, 6, 4);
  add("handle", 550, 642, 6, 4);
  texts.push([0, 197, 632, "Xxxxxxxxxx.", 13, 0], [0, 279, 632, "Xxxxxxxxxx...", 13.5, 0]);
  add("frame sel", 572, 643, 63, 27);

  texts.forEach(t => {
    const el = add("rt" + (t[5] ? " b" : ""), t[1], t[2] - 10, t[6] ?? null, null, t[3]);
    el.style.fontSize = t[4] + "px";
    if (t[6]) el.classList.add("text-end");
    if (t[7]) el.classList.add(t[7]);
  });

  add("tip", 592, 677, 324, 29, "RUB_PDS_A_LIVRER (REQ_Maïs_Réglage_Semoir.PDS_A_LIVRER)<br>&lt;109, 139&gt; &lt;16x7&gt;");

  // reminder block, cut by the bottom of the view
  const remind = document.createElement("table");
  remind.className = "table remind";
  remind.innerHTML = `<colgroup><col width="129"><col width="588"></colgroup>
    <tr class="first thick"><td rowspan="4" class="lefttop">RAPPEL<br>IMPORTANT ET<br>OBLIGATOIRE</td><td>VEUILLEZ CONSERVER VOS CERTIFICATS JUSQU'A LA RECOLTE<br>SINON VOTRE CONTRAT NE SERA PAS VALIDE PAR LE GNIS</td></tr>
    <tr class="next thick"><td>VOUS DEVEZ ETRE CAPABLE D'IDENTIFIER LES LOTS DE SB DANS LE CHAMP</td></tr>
    <tr class="next"><td>BORDEZ VOTRE PARCELLE DE 2 MÂLES MINIMUM (MOTIF DE REFUS)</td></tr>
    <tr class="next"><td>LAISSEZ LES PASSAGES D'ENROULEUR NON SEMES (DANS LES FEMELLES)</td></tr>`;
  remind.style.left = 195 - OX + "px"; remind.style.top = 743 - OY + "px";
  canvas.appendChild(remind);
</script>
</body>
</html>
